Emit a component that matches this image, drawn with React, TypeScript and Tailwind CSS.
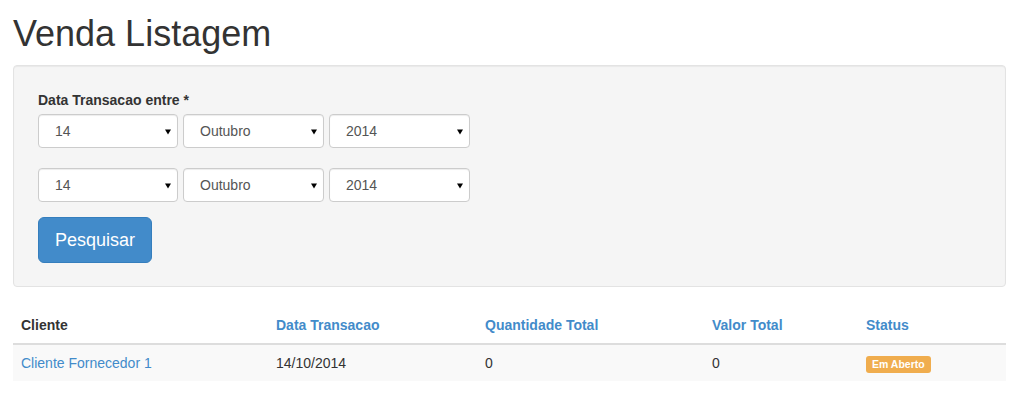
import React from 'react';

const dias = Array.from({ length: 31 }, (_, i) => String(i + 1));
const meses = [
  'Janeiro', 'Fevereiro', 'Março', 'Abril', 'Maio', 'Junho',
  'Julho', 'Agosto', 'Setembro', 'Outubro', 'Novembro', 'Dezembro',
];
const anos = ['2012', '2013', '2014', '2015'];

function Select({ value, options, width }: { value: string; options: string[]; width: string }) {
  return (
    <div className={`relative ${width}`}>
      <select
        defaultValue={value}
        className="w-full h-[34px] appearance-none bg-white border border-[#ccc] rounded-[4px] pl-[16px] pr-6 text-[14px] text-[#555] shadow-[inset_0_1px_1px_rgba(0,0,0,0.075)] outline-none"
      >
        {options.map((o) => (
          <option key={o}>{o}</option>
        ))}
      </select>
      <svg
        className="absolute right-[7px] top-[15px] pointer-events-none"
        width="6"
        height="6"
        viewBox="0 0 6 6"
      >
        <polygon points="0,0.5 6,0.5 3,5.5" fill="#000" />
      </svg>
    </div>
  );
}

function DateRow() {
  return (
    <div className="flex gap-[5px]">
      <Select value="14" options={dias} width="w-[140px]" />
      <Select value="Outubro" options={meses} width="w-[141px]" />
      <Select value="2014" options={anos} width="w-[141px]" />
    </div>
  );
}

export default function App() {
  return (
    <div className="min-h-screen bg-white px-[13px] text-[14px] leading-[20px] text-[#333] font-['Liberation_Sans',Arial,sans-serif]">
      {/* Titulo */}
      <h1 className="pt-[14px] mb-[11px] text-[36px] leading-[40px] font-normal text-[#333]">
        Venda Listagem
      </h1>

      {/* Filtro */}
      <div className="bg-[#f5f5f5] border border-[#e3e3e3] rounded-[4px] shadow-[inset_0_1px_1px_rgba(0,0,0,0.05)] pt-[24px] pb-[23px] px-[24px]">
        <label className="block font-bold mb-[4px]">Data Transacao entre *</label>
        <DateRow />
        <div className="h-[20px]" />
        <DateRow />
        <button className="mt-[15px] bg-[#428bca] border border-[#357ebd] rounded-[6px] text-white text-[18px] leading-[24px] px-[16px] py-[10px]">
          Pesquisar
        </button>
      </div>

      {/* Tabela */}
      <table className="w-full mt-[20px] border-collapse text-left">
        <thead>
          <tr className="border-b-2 border-[#ddd]">
            <th className="w-[255px] p-[8px] font-bold text-[#333]">Cliente</th>
            <th className="w-[209px] p-[8px] font-bold text-[#428bca]">Data Transacao</th>
            <th className="w-[227px] p-[8px] font-bold text-[#428bca]">Quantidade Total</th>
            <th className="w-[154px] p-[8px] font-bold text-[#428bca]">Valor Total</th>
            <th className="p-[8px] font-bold text-[#428bca]">Status</th>
          </tr>
        </thead>
        <tbody>
          <tr className="bg-[#f9f9f9]">
            <td className="p-[8px] text-[#428bca]">Cliente Fornecedor 1</td>
            <td className="p-[8px]">14/10/2014</td>
            <td className="p-[8px]">0</td>
            <td className="p-[8px]">0</td>
            <td className="p-[8px]">
              <span className="inline-block bg-[#f0ad4e] text-white font-bold text-[10.5px] leading-none rounded-[3px] px-[6px] pt-[3px] pb-[4px] align-middle">
                Em Aberto
              </span>
            </td>
          </tr>
        </tbody>
      </table>
    </div>
  );
}
